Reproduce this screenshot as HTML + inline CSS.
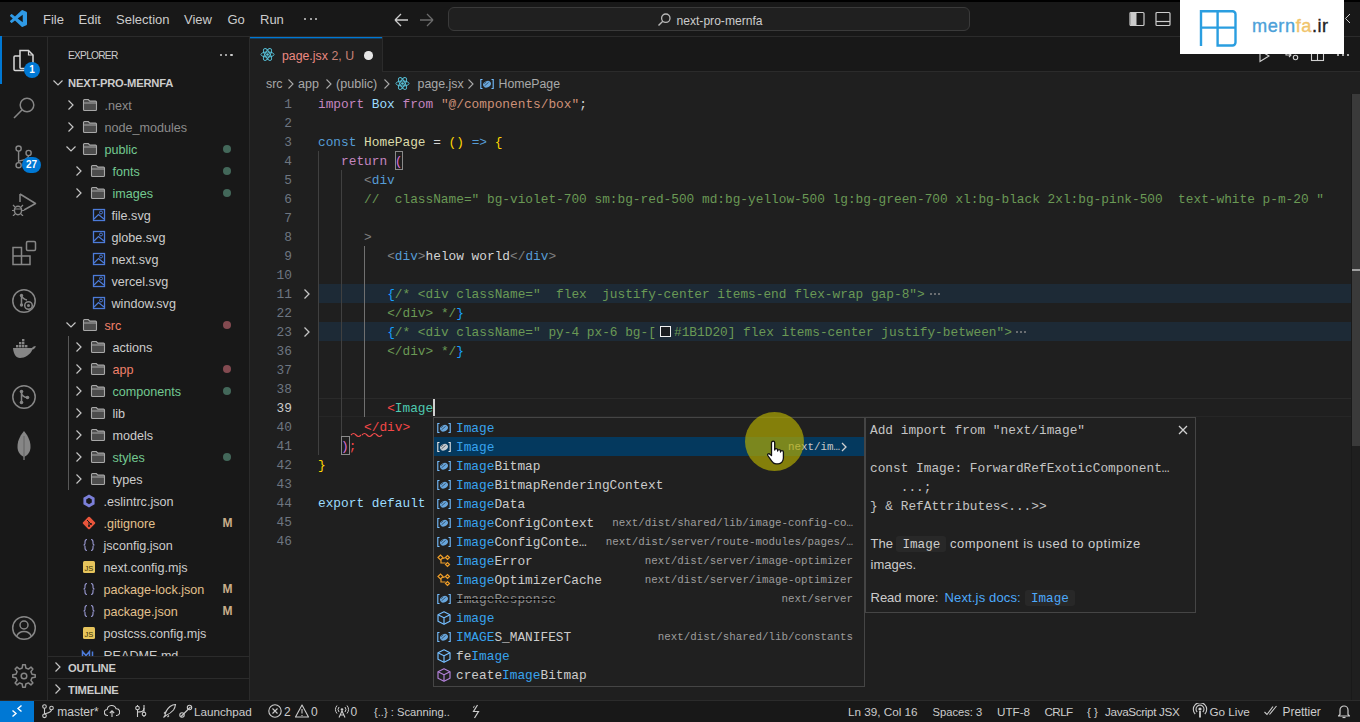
<!DOCTYPE html><html><head><meta charset="utf-8"><style>
*{margin:0;padding:0;box-sizing:border-box}
html,body{width:1360px;height:722px;overflow:hidden;background:#1f1f1f}
body>div,body>svg{position:absolute}
.s{font-family:"Liberation Sans",sans-serif;white-space:pre}
.m{font-family:"Liberation Mono",monospace;white-space:pre}
</style></head><body><div style="left:0px;top:0px;width:1360px;height:2px;background:#000;"></div>
<div style="left:0px;top:2px;width:1360px;height:34px;background:#181818;"></div>
<div style="left:0px;top:36px;width:1360px;height:1px;background:#2b2b2b;"></div>
<div style="left:0px;top:37px;width:47px;height:663px;background:#181818;"></div>
<div style="left:47px;top:37px;width:1px;height:663px;background:#2b2b2b;"></div>
<div style="left:48px;top:37px;width:201px;height:663px;background:#181818;"></div>
<div style="left:249px;top:37px;width:1px;height:663px;background:#2b2b2b;"></div>
<div style="left:250px;top:37px;width:1110px;height:35px;background:#181818;"></div>
<div style="left:250px;top:71px;width:1110px;height:1px;background:#2b2b2b;"></div>
<div style="left:250px;top:37px;width:133px;height:35px;background:#1f1f1f;"></div>
<div style="left:250px;top:37px;width:133px;height:1px;background:#0078d4;"></div>
<div style="left:250px;top:38px;width:133px;height:1px;background:rgba(0,120,212,0.35);"></div>
<div style="left:382px;top:37px;width:1px;height:35px;background:#2b2b2b;"></div>
<div style="left:250px;top:72px;width:1110px;height:628px;background:#1f1f1f;"></div>
<div style="left:0px;top:700px;width:1360px;height:22px;background:#181818;"></div>
<div style="left:0px;top:700px;width:1360px;height:1px;background:#2b2b2b;"></div>
<div style="left:0px;top:701px;width:34px;height:21px;background:#0078d4;"></div>
<svg style="left:9.5px;top:10px" width="17" height="17" viewBox="0 0 100 100"><path fill="#2f9ae6" d="M96.46 10.8 75.86.87a6.23 6.23 0 0 0-7.1 1.2L29.35 38.04 12.17 25a4.16 4.16 0 0 0-5.32.24L1.34 30.25a4.16 4.16 0 0 0 0 6.16L16.26 50 1.34 63.59a4.16 4.16 0 0 0 0 6.16l5.51 5.01a4.16 4.16 0 0 0 5.32.24l17.18-13.04 39.41 35.96a6.23 6.23 0 0 0 7.1 1.2l20.6-9.92A6.24 6.24 0 0 0 100 83.6V16.4a6.24 6.24 0 0 0-3.54-5.6zM75.02 72.7 45.11 50l29.91-22.7z"/></svg>
<div class="s" style="left:43px;top:10px;height:20px;line-height:20px;color:#cccccc;font-size:13px;">File</div>
<div class="s" style="left:78.5px;top:10px;height:20px;line-height:20px;color:#cccccc;font-size:13px;">Edit</div>
<div class="s" style="left:116px;top:10px;height:20px;line-height:20px;color:#cccccc;font-size:13px;">Selection</div>
<div class="s" style="left:184px;top:10px;height:20px;line-height:20px;color:#cccccc;font-size:13px;">View</div>
<div class="s" style="left:227.5px;top:10px;height:20px;line-height:20px;color:#cccccc;font-size:13px;">Go</div>
<div class="s" style="left:260px;top:10px;height:20px;line-height:20px;color:#cccccc;font-size:13px;">Run</div>
<div style="left:304.0px;top:18px;width:2.2px;height:2.2px;background:#cccccc;border-radius:50%"></div>
<div style="left:309.5px;top:18px;width:2.2px;height:2.2px;background:#cccccc;border-radius:50%"></div>
<div style="left:315.0px;top:18px;width:2.2px;height:2.2px;background:#cccccc;border-radius:50%"></div>
<svg style="left:391.5px;top:12px" width="44" height="16" viewBox="0 0 44 16"><path d="M3 8h13M3 8l6-6M3 8l6 6" stroke="#cccccc" stroke-width="1.3" fill="none"/><path d="M28 8h13M41 8l-6-6M41 8l-6 6" stroke="#6b6b6b" stroke-width="1.3" fill="none"/></svg>
<div style="left:448px;top:7px;width:522px;height:24px;background:#202020;border:1px solid #3a3a3a;border-radius:6px"></div>
<svg style="left:656px;top:12px" width="16" height="16" viewBox="0 0 16 16"><circle cx="9.8" cy="6.2" r="4.2" stroke="#b8b8b8" stroke-width="1.3" fill="none"/><path d="M6.8 9.2 2.5 13.5" stroke="#b8b8b8" stroke-width="1.4"/></svg>
<div class="s" style="left:676.5px;top:10.5px;height:20px;line-height:20px;color:#cccccc;font-size:12.1px;">next-pro-mernfa</div>
<svg style="left:1128px;top:11px" width="44" height="16" viewBox="0 0 44 16"><rect x="2" y="1.5" width="14" height="13" rx="1" stroke="#cccccc" stroke-width="1.2" fill="none"/><rect x="2.5" y="2" width="6" height="12" fill="#cccccc"/><rect x="28" y="1.5" width="14" height="13" rx="1" stroke="#cccccc" stroke-width="1.2" fill="none"/><path d="M28 10.5h14" stroke="#cccccc" stroke-width="1.2"/></svg>
<svg style="left:1343px;top:12px" width="20" height="20" viewBox="0 0 20 20"><path d="M7 2 2.5 6.5 7 11" stroke="#cccccc" stroke-width="1" fill="none"/></svg>
<svg style="left:1255px;top:44.5px" width="100" height="20" viewBox="0 0 100 20"><path d="M5 5.5v11l9-5.5z" stroke="#d0d0d0" stroke-width="1.1" fill="none"/><path d="M31 4v6h5M34 8l2 2-2 2" stroke="#d0d0d0" stroke-width="1.1" fill="none"/><circle cx="40.5" cy="12.5" r="2.2" stroke="#d0d0d0" stroke-width="1.1" fill="none"/><rect x="56.5" y="4.5" width="12" height="11" stroke="#d0d0d0" stroke-width="1.1" fill="none"/><path d="M62.5 4.5v11" stroke="#d0d0d0" stroke-width="1.1"/><circle cx="83" cy="10" r="1.1" fill="#d0d0d0"/><circle cx="88" cy="10" r="1.1" fill="#d0d0d0"/><circle cx="93" cy="10" r="1.1" fill="#d0d0d0"/></svg>
<div style="left:0px;top:36px;width:2px;height:48px;background:#0078d4;"></div>
<svg style="left:12px;top:45.5px" width="24" height="26" viewBox="0 0 24 26"><path d="M8 4.5h8.5l4.5 4.5v12.5c0 .6-.4 1-1 1H9c-.6 0-1-.4-1-1z" stroke="#d7d7d7" stroke-width="1.5" fill="none"/><path d="M16.5 4.5V9H21" stroke="#d7d7d7" stroke-width="1.2" fill="none"/><path d="M8 10H3c-.6 0-1 .4-1 1v12.5c0 .6.4 1 1 1h9c.6 0 1-.4 1-1V22" stroke="#d7d7d7" stroke-width="1.5" fill="none"/></svg>
<div style="left:24px;top:61.5px;width:16px;height:16px;background:#0078d4;border-radius:50%"></div>
<div class="s" style="left:24px;top:61.5px;height:16px;line-height:16px;color:#ffffff;font-size:10px;width:16px;text-align:center;font-weight:bold">1</div>
<svg style="left:11px;top:93px" width="26" height="28" viewBox="0 0 26 28"><circle cx="16" cy="12" r="6.8" stroke="#868686" stroke-width="1.5" fill="none"/><path d="M11.2 16.8 3 25" stroke="#868686" stroke-width="1.6"/></svg>
<svg style="left:11px;top:140px" width="26" height="30" viewBox="0 0 26 30"><circle cx="7.6" cy="8.6" r="2.6" stroke="#868686" stroke-width="1.4" fill="none"/><circle cx="17.6" cy="13" r="2.6" stroke="#868686" stroke-width="1.4" fill="none"/><circle cx="7.6" cy="25.2" r="2.6" stroke="#868686" stroke-width="1.4" fill="none"/><path d="M7.6 11.2v11.4M17.6 15.6c0 3-3 4.5-10 5.5" stroke="#868686" stroke-width="1.4" fill="none"/></svg>
<div style="left:22px;top:157px;width:19px;height:16px;background:#0078d4;border-radius:8px"></div>
<div class="s" style="left:22px;top:157px;height:16px;line-height:16px;color:#ffffff;font-size:10px;width:19px;text-align:center;font-weight:bold">27</div>
<svg style="left:10px;top:190px" width="28" height="26" viewBox="0 0 28 26"><path d="M10 4v8M10 4l15.5 9.5L14 20" stroke="#868686" stroke-width="1.5" fill="none" stroke-linejoin="round"/><ellipse cx="8" cy="20.5" rx="3.6" ry="4.2" stroke="#868686" stroke-width="1.5" fill="none"/><path d="M4.4 20.5H2M11.6 20.5H14M5 17l-2-2M11 17l2-2M5 24l-2 2M11 24l2 2M4.5 19h7" stroke="#868686" stroke-width="1.2"/></svg>
<svg style="left:10px;top:238px" width="28" height="28" viewBox="0 0 28 28"><path d="M3 9.5h8.5v8.5H3zM3 18h8.5v8.5H3zM11.5 18H20v8.5h-8.5z" stroke="#868686" stroke-width="1.5" fill="none"/><rect x="16.5" y="3.5" width="9" height="9" rx="1.2" stroke="#868686" stroke-width="1.5" fill="none"/></svg>
<svg style="left:11px;top:288px" width="26" height="26" viewBox="0 0 26 26"><circle cx="13" cy="13" r="11.2" stroke="#868686" stroke-width="1.5" fill="none"/><circle cx="10.5" cy="7.5" r="1.7" fill="#868686"/><circle cx="10.5" cy="17" r="1.7" fill="#868686"/><path d="M10.5 7.5v9.5M10.5 7.5c1 3 3 4 5.5 4.5" stroke="#868686" stroke-width="1.5" fill="none"/><circle cx="17.5" cy="17.5" r="3.8" fill="#181818" stroke="#868686" stroke-width="1.5"/><circle cx="17.5" cy="17.5" r="1.5" fill="#868686"/></svg>
<svg style="left:11px;top:336px" width="26" height="24" viewBox="0 0 26 24"><path d="M2 12h19c1-1.5 2.5-2 4-1.5-1 1.5-2 3-3.5 3C19 19 14 22 9 22 5 22 2.5 18 2 12z" fill="#868686"/><rect x="5" y="9" width="2.4" height="2.4" fill="#868686"/><rect x="8" y="9" width="2.4" height="2.4" fill="#868686"/><rect x="11" y="9" width="2.4" height="2.4" fill="#868686"/><rect x="14" y="9" width="2.4" height="2.4" fill="#868686"/><rect x="8" y="6" width="2.4" height="2.4" fill="#868686"/><rect x="11" y="6" width="2.4" height="2.4" fill="#868686"/><rect x="11" y="3" width="2.4" height="2.4" fill="#868686"/></svg>
<svg style="left:11px;top:384px" width="26" height="26" viewBox="0 0 26 26"><circle cx="13" cy="13" r="11.2" stroke="#868686" stroke-width="1.5" fill="none"/><circle cx="10.5" cy="7.5" r="1.8" fill="#868686"/><circle cx="10.5" cy="18.5" r="1.8" fill="#868686"/><circle cx="16.5" cy="13.5" r="1.8" fill="#868686"/><path d="M10.5 7.5v11M10.5 8.5c0 3 3 5 6 5" stroke="#868686" stroke-width="1.5" fill="none"/></svg>
<svg style="left:14px;top:430px" width="20" height="32" viewBox="0 0 20 32"><path d="M10 1C5 7 3.5 12 3.5 17c0 5 3 8.5 6.5 10 3.5-1.5 6.5-5 6.5-10 0-5-1.5-10-6.5-16z" fill="#868686"/><path d="M10 20v10" stroke="#868686" stroke-width="1.2"/><path d="M10 6v21" stroke="#5a5a5a" stroke-width="0.8"/></svg>
<svg style="left:11px;top:615px" width="26" height="26" viewBox="0 0 26 26"><circle cx="13" cy="13" r="11.3" stroke="#868686" stroke-width="1.5" fill="none"/><circle cx="13" cy="10" r="4" stroke="#868686" stroke-width="1.5" fill="none"/><path d="M5.5 21.5c1.5-3.5 4-5 7.5-5s6 1.5 7.5 5" stroke="#868686" stroke-width="1.5" fill="none"/></svg>
<svg style="left:11px;top:663px" width="26" height="26" viewBox="0 0 26 26"><polygon points="21.00,11.21 24.22,11.65 24.22,14.35 21.00,14.79 19.92,17.39 21.89,19.98 19.98,21.89 17.39,19.92 14.79,21.00 14.35,24.22 11.65,24.22 11.21,21.00 8.61,19.92 6.02,21.89 4.11,19.98 6.08,17.39 5.00,14.79 1.78,14.35 1.78,11.65 5.00,11.21 6.08,8.61 4.11,6.02 6.02,4.11 8.61,6.08 11.21,5.00 11.65,1.78 14.35,1.78 14.79,5.00 17.39,6.08 19.98,4.11 21.89,6.02 19.92,8.61" stroke="#868686" stroke-width="1.5" fill="none" stroke-linejoin="round"/><circle cx="13" cy="13" r="2.8" stroke="#868686" stroke-width="1.5" fill="none"/></svg>
<div class="s" style="left:68px;top:47px;height:18px;line-height:18px;color:#cccccc;font-size:10.2px;letter-spacing:-0.75px">EXPLORER</div>
<div style="left:220.0px;top:54px;width:2.2px;height:2.2px;background:#cccccc;border-radius:50%"></div>
<div style="left:225.2px;top:54px;width:2.2px;height:2.2px;background:#cccccc;border-radius:50%"></div>
<div style="left:230.4px;top:54px;width:2.2px;height:2.2px;background:#cccccc;border-radius:50%"></div>
<svg style="left:50px;top:75px" width="16" height="16" viewBox="0 0 16 16"><path d="M3.5 5.5 8 10l4.5-4.5" stroke="#c5c5c5" stroke-width="1.2" fill="none"/></svg>
<div class="s" style="left:68px;top:74px;height:18px;line-height:18px;color:#cccccc;font-size:11.2px;font-weight:bold;letter-spacing:-0.2px">NEXT-PRO-MERNFA</div>
<div style="left:67.5px;top:336px;width:1px;height:154px;background:#585858;"></div>
<svg style="left:63px;top:97px" width="16" height="16" viewBox="0 0 16 16"><path d="M5.5 3.5 10 8l-4.5 4.5" stroke="#c5c5c5" stroke-width="1.2" fill="none"/></svg>
<svg style="left:82px;top:97px" width="16" height="16" viewBox="0 0 16 16"><path d="M1.5 3.5c0-.6.4-1 1-1h3.8l1.6 1.6h5.6c.6 0 1 .4 1 1v7.4c0 .6-.4 1-1 1H2.5c-.6 0-1-.4-1-1z" fill="#4d4d4d" stroke="#a8a8a8" stroke-width="1.1"/><path d="M1.5 6h13" stroke="#a8a8a8" stroke-width="1"/></svg>
<div class="s" style="left:104.5px;top:96.5px;height:18px;line-height:18px;color:#8c8c8c;font-size:12.6px;">.next</div>
<svg style="left:63px;top:119px" width="16" height="16" viewBox="0 0 16 16"><path d="M5.5 3.5 10 8l-4.5 4.5" stroke="#c5c5c5" stroke-width="1.2" fill="none"/></svg>
<svg style="left:82px;top:119px" width="16" height="16" viewBox="0 0 16 16"><path d="M1.5 3.5c0-.6.4-1 1-1h3.8l1.6 1.6h5.6c.6 0 1 .4 1 1v7.4c0 .6-.4 1-1 1H2.5c-.6 0-1-.4-1-1z" fill="#4d4d4d" stroke="#a8a8a8" stroke-width="1.1"/><path d="M1.5 6h13" stroke="#a8a8a8" stroke-width="1"/></svg>
<div class="s" style="left:104.5px;top:118.5px;height:18px;line-height:18px;color:#8c8c8c;font-size:12.6px;">node_modules</div>
<svg style="left:63px;top:141px" width="16" height="16" viewBox="0 0 16 16"><path d="M3.5 5.5 8 10l4.5-4.5" stroke="#c5c5c5" stroke-width="1.2" fill="none"/></svg>
<svg style="left:82px;top:141px" width="16" height="16" viewBox="0 0 16 16"><path d="M1.5 3.5c0-.6.4-1 1-1h3.8l1.6 1.6h5.6c.6 0 1 .4 1 1v7.4c0 .6-.4 1-1 1H2.5c-.6 0-1-.4-1-1z" fill="#4d4d4d" stroke="#a8a8a8" stroke-width="1.1"/><path d="M1.5 6h13" stroke="#a8a8a8" stroke-width="1"/></svg>
<div class="s" style="left:104.5px;top:140.5px;height:18px;line-height:18px;color:#73c991;font-size:12.6px;">public</div>
<div style="left:223px;top:145px;width:8px;height:8px;background:#43685a;border-radius:50%"></div>
<svg style="left:71px;top:163px" width="16" height="16" viewBox="0 0 16 16"><path d="M5.5 3.5 10 8l-4.5 4.5" stroke="#c5c5c5" stroke-width="1.2" fill="none"/></svg>
<svg style="left:90px;top:163px" width="16" height="16" viewBox="0 0 16 16"><path d="M1.5 3.5c0-.6.4-1 1-1h3.8l1.6 1.6h5.6c.6 0 1 .4 1 1v7.4c0 .6-.4 1-1 1H2.5c-.6 0-1-.4-1-1z" fill="#4d4d4d" stroke="#a8a8a8" stroke-width="1.1"/><path d="M1.5 6h13" stroke="#a8a8a8" stroke-width="1"/></svg>
<div class="s" style="left:112.5px;top:162.5px;height:18px;line-height:18px;color:#73c991;font-size:12.6px;">fonts</div>
<div style="left:223px;top:167px;width:8px;height:8px;background:#43685a;border-radius:50%"></div>
<svg style="left:71px;top:185px" width="16" height="16" viewBox="0 0 16 16"><path d="M5.5 3.5 10 8l-4.5 4.5" stroke="#c5c5c5" stroke-width="1.2" fill="none"/></svg>
<svg style="left:90px;top:185px" width="16" height="16" viewBox="0 0 16 16"><path d="M1.5 3.5c0-.6.4-1 1-1h3.8l1.6 1.6h5.6c.6 0 1 .4 1 1v7.4c0 .6-.4 1-1 1H2.5c-.6 0-1-.4-1-1z" fill="#4d4d4d" stroke="#a8a8a8" stroke-width="1.1"/><path d="M1.5 6h13" stroke="#a8a8a8" stroke-width="1"/></svg>
<div class="s" style="left:112.5px;top:184.5px;height:18px;line-height:18px;color:#73c991;font-size:12.6px;">images</div>
<div style="left:223px;top:189px;width:8px;height:8px;background:#43685a;border-radius:50%"></div>
<svg style="left:91px;top:207px" width="16" height="16" viewBox="0 0 16 16"><rect x="2.5" y="2.5" width="11" height="11" stroke="#4c7bd9" stroke-width="1.3" fill="none"/><path d="M3 12l4.5-4.5L13 12" stroke="#4c7bd9" stroke-width="1.2" fill="none"/><circle cx="10" cy="5.5" r="1.5" stroke="#4c7bd9" stroke-width="1" fill="none"/></svg>
<div class="s" style="left:111.5px;top:206.5px;height:18px;line-height:18px;color:#cccccc;font-size:12.6px;">file.svg</div>
<svg style="left:91px;top:229px" width="16" height="16" viewBox="0 0 16 16"><rect x="2.5" y="2.5" width="11" height="11" stroke="#4c7bd9" stroke-width="1.3" fill="none"/><path d="M3 12l4.5-4.5L13 12" stroke="#4c7bd9" stroke-width="1.2" fill="none"/><circle cx="10" cy="5.5" r="1.5" stroke="#4c7bd9" stroke-width="1" fill="none"/></svg>
<div class="s" style="left:111.5px;top:228.5px;height:18px;line-height:18px;color:#cccccc;font-size:12.6px;">globe.svg</div>
<svg style="left:91px;top:251px" width="16" height="16" viewBox="0 0 16 16"><rect x="2.5" y="2.5" width="11" height="11" stroke="#4c7bd9" stroke-width="1.3" fill="none"/><path d="M3 12l4.5-4.5L13 12" stroke="#4c7bd9" stroke-width="1.2" fill="none"/><circle cx="10" cy="5.5" r="1.5" stroke="#4c7bd9" stroke-width="1" fill="none"/></svg>
<div class="s" style="left:111.5px;top:250.5px;height:18px;line-height:18px;color:#cccccc;font-size:12.6px;">next.svg</div>
<svg style="left:91px;top:273px" width="16" height="16" viewBox="0 0 16 16"><rect x="2.5" y="2.5" width="11" height="11" stroke="#4c7bd9" stroke-width="1.3" fill="none"/><path d="M3 12l4.5-4.5L13 12" stroke="#4c7bd9" stroke-width="1.2" fill="none"/><circle cx="10" cy="5.5" r="1.5" stroke="#4c7bd9" stroke-width="1" fill="none"/></svg>
<div class="s" style="left:111.5px;top:272.5px;height:18px;line-height:18px;color:#cccccc;font-size:12.6px;">vercel.svg</div>
<svg style="left:91px;top:295px" width="16" height="16" viewBox="0 0 16 16"><rect x="2.5" y="2.5" width="11" height="11" stroke="#4c7bd9" stroke-width="1.3" fill="none"/><path d="M3 12l4.5-4.5L13 12" stroke="#4c7bd9" stroke-width="1.2" fill="none"/><circle cx="10" cy="5.5" r="1.5" stroke="#4c7bd9" stroke-width="1" fill="none"/></svg>
<div class="s" style="left:111.5px;top:294.5px;height:18px;line-height:18px;color:#cccccc;font-size:12.6px;">window.svg</div>
<svg style="left:63px;top:317px" width="16" height="16" viewBox="0 0 16 16"><path d="M3.5 5.5 8 10l4.5-4.5" stroke="#c5c5c5" stroke-width="1.2" fill="none"/></svg>
<svg style="left:82px;top:317px" width="16" height="16" viewBox="0 0 16 16"><path d="M1.5 3.5c0-.6.4-1 1-1h3.8l1.6 1.6h5.6c.6 0 1 .4 1 1v7.4c0 .6-.4 1-1 1H2.5c-.6 0-1-.4-1-1z" fill="#4d4d4d" stroke="#a8a8a8" stroke-width="1.1"/><path d="M1.5 6h13" stroke="#a8a8a8" stroke-width="1"/></svg>
<div class="s" style="left:104.5px;top:316.5px;height:18px;line-height:18px;color:#f0806a;font-size:12.6px;">src</div>
<div style="left:223px;top:321px;width:8px;height:8px;background:#834a50;border-radius:50%"></div>
<svg style="left:71px;top:339px" width="16" height="16" viewBox="0 0 16 16"><path d="M5.5 3.5 10 8l-4.5 4.5" stroke="#c5c5c5" stroke-width="1.2" fill="none"/></svg>
<svg style="left:90px;top:339px" width="16" height="16" viewBox="0 0 16 16"><path d="M1.5 3.5c0-.6.4-1 1-1h3.8l1.6 1.6h5.6c.6 0 1 .4 1 1v7.4c0 .6-.4 1-1 1H2.5c-.6 0-1-.4-1-1z" fill="#4d4d4d" stroke="#a8a8a8" stroke-width="1.1"/><path d="M1.5 6h13" stroke="#a8a8a8" stroke-width="1"/></svg>
<div class="s" style="left:112.5px;top:338.5px;height:18px;line-height:18px;color:#cccccc;font-size:12.6px;">actions</div>
<svg style="left:71px;top:361px" width="16" height="16" viewBox="0 0 16 16"><path d="M5.5 3.5 10 8l-4.5 4.5" stroke="#c5c5c5" stroke-width="1.2" fill="none"/></svg>
<svg style="left:90px;top:361px" width="16" height="16" viewBox="0 0 16 16"><path d="M1.5 3.5c0-.6.4-1 1-1h3.8l1.6 1.6h5.6c.6 0 1 .4 1 1v7.4c0 .6-.4 1-1 1H2.5c-.6 0-1-.4-1-1z" fill="#4d4d4d" stroke="#a8a8a8" stroke-width="1.1"/><path d="M1.5 6h13" stroke="#a8a8a8" stroke-width="1"/></svg>
<div class="s" style="left:112.5px;top:360.5px;height:18px;line-height:18px;color:#f0806a;font-size:12.6px;">app</div>
<div style="left:223px;top:365px;width:8px;height:8px;background:#834a50;border-radius:50%"></div>
<svg style="left:71px;top:383px" width="16" height="16" viewBox="0 0 16 16"><path d="M5.5 3.5 10 8l-4.5 4.5" stroke="#c5c5c5" stroke-width="1.2" fill="none"/></svg>
<svg style="left:90px;top:383px" width="16" height="16" viewBox="0 0 16 16"><path d="M1.5 3.5c0-.6.4-1 1-1h3.8l1.6 1.6h5.6c.6 0 1 .4 1 1v7.4c0 .6-.4 1-1 1H2.5c-.6 0-1-.4-1-1z" fill="#4d4d4d" stroke="#a8a8a8" stroke-width="1.1"/><path d="M1.5 6h13" stroke="#a8a8a8" stroke-width="1"/></svg>
<div class="s" style="left:112.5px;top:382.5px;height:18px;line-height:18px;color:#73c991;font-size:12.6px;">components</div>
<div style="left:223px;top:387px;width:8px;height:8px;background:#43685a;border-radius:50%"></div>
<svg style="left:71px;top:405px" width="16" height="16" viewBox="0 0 16 16"><path d="M5.5 3.5 10 8l-4.5 4.5" stroke="#c5c5c5" stroke-width="1.2" fill="none"/></svg>
<svg style="left:90px;top:405px" width="16" height="16" viewBox="0 0 16 16"><path d="M1.5 3.5c0-.6.4-1 1-1h3.8l1.6 1.6h5.6c.6 0 1 .4 1 1v7.4c0 .6-.4 1-1 1H2.5c-.6 0-1-.4-1-1z" fill="#4d4d4d" stroke="#a8a8a8" stroke-width="1.1"/><path d="M1.5 6h13" stroke="#a8a8a8" stroke-width="1"/></svg>
<div class="s" style="left:112.5px;top:404.5px;height:18px;line-height:18px;color:#cccccc;font-size:12.6px;">lib</div>
<svg style="left:71px;top:427px" width="16" height="16" viewBox="0 0 16 16"><path d="M5.5 3.5 10 8l-4.5 4.5" stroke="#c5c5c5" stroke-width="1.2" fill="none"/></svg>
<svg style="left:90px;top:427px" width="16" height="16" viewBox="0 0 16 16"><path d="M1.5 3.5c0-.6.4-1 1-1h3.8l1.6 1.6h5.6c.6 0 1 .4 1 1v7.4c0 .6-.4 1-1 1H2.5c-.6 0-1-.4-1-1z" fill="#4d4d4d" stroke="#a8a8a8" stroke-width="1.1"/><path d="M1.5 6h13" stroke="#a8a8a8" stroke-width="1"/></svg>
<div class="s" style="left:112.5px;top:426.5px;height:18px;line-height:18px;color:#cccccc;font-size:12.6px;">models</div>
<svg style="left:71px;top:449px" width="16" height="16" viewBox="0 0 16 16"><path d="M5.5 3.5 10 8l-4.5 4.5" stroke="#c5c5c5" stroke-width="1.2" fill="none"/></svg>
<svg style="left:90px;top:449px" width="16" height="16" viewBox="0 0 16 16"><path d="M1.5 3.5c0-.6.4-1 1-1h3.8l1.6 1.6h5.6c.6 0 1 .4 1 1v7.4c0 .6-.4 1-1 1H2.5c-.6 0-1-.4-1-1z" fill="#4d4d4d" stroke="#a8a8a8" stroke-width="1.1"/><path d="M1.5 6h13" stroke="#a8a8a8" stroke-width="1"/></svg>
<div class="s" style="left:112.5px;top:448.5px;height:18px;line-height:18px;color:#73c991;font-size:12.6px;">styles</div>
<div style="left:223px;top:453px;width:8px;height:8px;background:#43685a;border-radius:50%"></div>
<svg style="left:71px;top:471px" width="16" height="16" viewBox="0 0 16 16"><path d="M5.5 3.5 10 8l-4.5 4.5" stroke="#c5c5c5" stroke-width="1.2" fill="none"/></svg>
<svg style="left:90px;top:471px" width="16" height="16" viewBox="0 0 16 16"><path d="M1.5 3.5c0-.6.4-1 1-1h3.8l1.6 1.6h5.6c.6 0 1 .4 1 1v7.4c0 .6-.4 1-1 1H2.5c-.6 0-1-.4-1-1z" fill="#4d4d4d" stroke="#a8a8a8" stroke-width="1.1"/><path d="M1.5 6h13" stroke="#a8a8a8" stroke-width="1"/></svg>
<div class="s" style="left:112.5px;top:470.5px;height:18px;line-height:18px;color:#cccccc;font-size:12.6px;">types</div>
<svg style="left:81px;top:493px" width="16" height="16" viewBox="0 0 16 16"><polygon points="8,1.5 13.6,4.75 13.6,11.25 8,14.5 2.4,11.25 2.4,4.75" fill="#7b7fd8"/><polygon points="8,4.8 10.8,6.4 10.8,9.6 8,11.2 5.2,9.6 5.2,6.4" fill="#181818"/></svg>
<div class="s" style="left:103.5px;top:492.5px;height:18px;line-height:18px;color:#cccccc;font-size:12.6px;">.eslintrc.json</div>
<svg style="left:81px;top:515px" width="16" height="16" viewBox="0 0 16 16"><rect x="3.2" y="3.2" width="9.6" height="9.6" rx="1.2" transform="rotate(45 8 8)" fill="#e8553b"/><path d="M6 5l4 4M8 7v4" stroke="#181818" stroke-width="1"/><circle cx="8" cy="11" r="1" fill="#181818"/><circle cx="10" cy="9" r="1" fill="#181818"/></svg>
<div class="s" style="left:103.5px;top:514.5px;height:18px;line-height:18px;color:#e2c08d;font-size:12.6px;">.gitignore</div>
<div class="s" style="left:222.5px;top:514px;height:18px;line-height:18px;color:#c8ae8a;font-size:12px;font-weight:bold">M</div>
<svg style="left:81px;top:537px" width="16" height="16" viewBox="0 0 16 16"><path d="M6 2.5c-2 0-2 1-2 2.5v1.5c0 1-.8 1.5-1.5 1.5.7 0 1.5.5 1.5 1.5V11c0 1.5 0 2.5 2 2.5M10 2.5c2 0 2 1 2 2.5v1.5c0 1 .8 1.5 1.5 1.5-.7 0-1.5.5-1.5 1.5V11c0 1.5 0 2.5-2 2.5" stroke="#9b9bd4" stroke-width="1.1" fill="none"/></svg>
<div class="s" style="left:103.5px;top:536.5px;height:18px;line-height:18px;color:#cccccc;font-size:12.6px;">jsconfig.json</div>
<svg style="left:81px;top:559px" width="16" height="16" viewBox="0 0 16 16"><rect x="2" y="2" width="12" height="12" rx="1.5" fill="#e6c45c"/><text x="8" y="11.6" font-family="Liberation Sans" font-size="7.5" text-anchor="middle" fill="#3a3000">JS</text></svg>
<div class="s" style="left:103.5px;top:558.5px;height:18px;line-height:18px;color:#cccccc;font-size:12.6px;">next.config.mjs</div>
<svg style="left:81px;top:581px" width="16" height="16" viewBox="0 0 16 16"><path d="M6 2.5c-2 0-2 1-2 2.5v1.5c0 1-.8 1.5-1.5 1.5.7 0 1.5.5 1.5 1.5V11c0 1.5 0 2.5 2 2.5M10 2.5c2 0 2 1 2 2.5v1.5c0 1 .8 1.5 1.5 1.5-.7 0-1.5.5-1.5 1.5V11c0 1.5 0 2.5-2 2.5" stroke="#9b9bd4" stroke-width="1.1" fill="none"/></svg>
<div class="s" style="left:103.5px;top:580.5px;height:18px;line-height:18px;color:#e2c08d;font-size:12.6px;">package-lock.json</div>
<div class="s" style="left:222.5px;top:580px;height:18px;line-height:18px;color:#c8ae8a;font-size:12px;font-weight:bold">M</div>
<svg style="left:81px;top:603px" width="16" height="16" viewBox="0 0 16 16"><path d="M6 2.5c-2 0-2 1-2 2.5v1.5c0 1-.8 1.5-1.5 1.5.7 0 1.5.5 1.5 1.5V11c0 1.5 0 2.5 2 2.5M10 2.5c2 0 2 1 2 2.5v1.5c0 1 .8 1.5 1.5 1.5-.7 0-1.5.5-1.5 1.5V11c0 1.5 0 2.5-2 2.5" stroke="#9b9bd4" stroke-width="1.1" fill="none"/></svg>
<div class="s" style="left:103.5px;top:602.5px;height:18px;line-height:18px;color:#e2c08d;font-size:12.6px;">package.json</div>
<div class="s" style="left:222.5px;top:602px;height:18px;line-height:18px;color:#c8ae8a;font-size:12px;font-weight:bold">M</div>
<svg style="left:81px;top:625px" width="16" height="16" viewBox="0 0 16 16"><rect x="2" y="2" width="12" height="12" rx="1.5" fill="#e6c45c"/><text x="8" y="11.6" font-family="Liberation Sans" font-size="7.5" text-anchor="middle" fill="#3a3000">JS</text></svg>
<div class="s" style="left:103.5px;top:624.5px;height:18px;line-height:18px;color:#cccccc;font-size:12.6px;">postcss.config.mjs</div>
<svg style="left:81px;top:647px" width="16" height="16" viewBox="0 0 16 16"><path d="M1.5 12V4.5l3.5 4 3.5-4V12M11.5 4.5V12M9.5 10l2 2 2-2" stroke="#4c7bd9" stroke-width="1.5" fill="none"/></svg>
<div class="s" style="left:103.5px;top:646.5px;height:18px;line-height:18px;color:#cccccc;font-size:12.6px;">README.md</div>
<div style="left:48px;top:656px;width:201px;height:44px;background:#181818;"></div>
<div style="left:48px;top:656px;width:201px;height:1px;background:#2b2b2b;"></div>
<div style="left:48px;top:678px;width:201px;height:1px;background:#2b2b2b;"></div>
<svg style="left:50px;top:659px" width="16" height="16" viewBox="0 0 16 16"><path d="M5.5 3.5 10 8l-4.5 4.5" stroke="#c5c5c5" stroke-width="1.2" fill="none"/></svg>
<div class="s" style="left:68px;top:659px;height:18px;line-height:18px;color:#cccccc;font-size:11.2px;font-weight:bold;letter-spacing:-0.2px">OUTLINE</div>
<svg style="left:50px;top:681px" width="16" height="16" viewBox="0 0 16 16"><path d="M5.5 3.5 10 8l-4.5 4.5" stroke="#c5c5c5" stroke-width="1.2" fill="none"/></svg>
<div class="s" style="left:68px;top:681px;height:18px;line-height:18px;color:#cccccc;font-size:11.2px;font-weight:bold;letter-spacing:-0.2px">TIMELINE</div>
<svg style="left:260px;top:47px" width="15" height="15" viewBox="0 0 16 16"><g stroke="#58c4dc" stroke-width="1" fill="none"><ellipse cx="8" cy="8" rx="7" ry="2.7"/><ellipse cx="8" cy="8" rx="7" ry="2.7" transform="rotate(60 8 8)"/><ellipse cx="8" cy="8" rx="7" ry="2.7" transform="rotate(-60 8 8)"/></g><circle cx="8" cy="8" r="1.4" fill="#58c4dc"/></svg>
<div class="s" style="left:282px;top:47px;height:18px;line-height:18px;color:#ec8a82;font-size:12.3px;">page.jsx</div>
<div class="s" style="left:331.5px;top:47px;height:18px;line-height:18px;color:#c98276;font-size:12.3px;">2, U</div>
<div style="left:364px;top:51px;width:8.5px;height:8.5px;background:#e6e6e6;border-radius:50%"></div>
<div class="s" style="left:266px;top:75px;height:18px;line-height:18px;color:#a9a9a9;font-size:12.4px;">src</div>
<svg style="left:283px;top:76px" width="16" height="16" viewBox="0 0 16 16"><path d="M5.5 3.5 10 8l-4.5 4.5" stroke="#a9a9a9" stroke-width="1.1" fill="none"/></svg>
<div class="s" style="left:298px;top:75px;height:18px;line-height:18px;color:#a9a9a9;font-size:12.5px;">app</div>
<svg style="left:320.5px;top:76px" width="16" height="16" viewBox="0 0 16 16"><path d="M5.5 3.5 10 8l-4.5 4.5" stroke="#a9a9a9" stroke-width="1.1" fill="none"/></svg>
<div class="s" style="left:336px;top:75px;height:18px;line-height:18px;color:#a9a9a9;font-size:12.6px;">(public)</div>
<svg style="left:379px;top:76px" width="16" height="16" viewBox="0 0 16 16"><path d="M5.5 3.5 10 8l-4.5 4.5" stroke="#a9a9a9" stroke-width="1.1" fill="none"/></svg>
<svg style="left:395px;top:76px" width="15" height="15" viewBox="0 0 16 16"><g stroke="#58c4dc" stroke-width="1" fill="none"><ellipse cx="8" cy="8" rx="7" ry="2.7"/><ellipse cx="8" cy="8" rx="7" ry="2.7" transform="rotate(60 8 8)"/><ellipse cx="8" cy="8" rx="7" ry="2.7" transform="rotate(-60 8 8)"/></g><circle cx="8" cy="8" r="1.4" fill="#58c4dc"/></svg>
<div class="s" style="left:417.5px;top:75px;height:18px;line-height:18px;color:#a9a9a9;font-size:12.4px;">page.jsx</div>
<svg style="left:462.5px;top:76px" width="16" height="16" viewBox="0 0 16 16"><path d="M5.5 3.5 10 8l-4.5 4.5" stroke="#a9a9a9" stroke-width="1.1" fill="none"/></svg>
<svg style="left:479px;top:76px" width="16" height="16" viewBox="0 0 16 16"><path d="M3.5 3.5H1.8v9h1.7M12.5 3.5h1.7v9h-1.7" stroke="#75beff" stroke-width="1.1" fill="none"/><ellipse cx="8" cy="8.2" rx="4.1" ry="3.1" transform="rotate(-28 8 8.2)" fill="#75beff" fill-opacity="0.85"/><path d="M5.6 9.8 9.6 6.4M5 7.6l2.2-1.8" stroke="#1f1f1f" stroke-width="0.8" opacity="0.75"/></svg>
<div class="s" style="left:498.5px;top:75px;height:18px;line-height:18px;color:#a9a9a9;font-size:12.3px;">HomePage</div>
<div style="left:319px;top:284px;width:1033px;height:19px;background:#1d2a36;"></div>
<div style="left:319px;top:322px;width:1033px;height:19px;background:#1d2a36;"></div>
<div style="left:319px;top:398px;width:1033px;height:1px;background:#2a2a2a;"></div>
<div style="left:319px;top:416px;width:1033px;height:1px;background:#262626;"></div>
<div style="left:318px;top:151px;width:1px;height:304px;background:#404040;"></div>
<div style="left:341px;top:170px;width:1px;height:266px;background:#404040;"></div>
<div style="left:364px;top:246px;width:1px;height:171px;background:#707070;"></div>
<div class="m" style="left:284.3px;top:95px;height:19px;line-height:19px;font-size:12.8px;color:#6e7681">1</div>
<div class="m" style="left:284.3px;top:114px;height:19px;line-height:19px;font-size:12.8px;color:#6e7681">2</div>
<div class="m" style="left:284.3px;top:133px;height:19px;line-height:19px;font-size:12.8px;color:#6e7681">3</div>
<div class="m" style="left:284.3px;top:152px;height:19px;line-height:19px;font-size:12.8px;color:#6e7681">4</div>
<div class="m" style="left:284.3px;top:171px;height:19px;line-height:19px;font-size:12.8px;color:#6e7681">5</div>
<div class="m" style="left:284.3px;top:190px;height:19px;line-height:19px;font-size:12.8px;color:#6e7681">6</div>
<div class="m" style="left:284.3px;top:209px;height:19px;line-height:19px;font-size:12.8px;color:#6e7681">7</div>
<div class="m" style="left:284.3px;top:228px;height:19px;line-height:19px;font-size:12.8px;color:#6e7681">8</div>
<div class="m" style="left:284.3px;top:247px;height:19px;line-height:19px;font-size:12.8px;color:#6e7681">9</div>
<div class="m" style="left:276.6px;top:266px;height:19px;line-height:19px;font-size:12.8px;color:#6e7681">10</div>
<div class="m" style="left:276.6px;top:285px;height:19px;line-height:19px;font-size:12.8px;color:#6e7681">11</div>
<div class="m" style="left:276.6px;top:304px;height:19px;line-height:19px;font-size:12.8px;color:#6e7681">22</div>
<div class="m" style="left:276.6px;top:323px;height:19px;line-height:19px;font-size:12.8px;color:#6e7681">23</div>
<div class="m" style="left:276.6px;top:342px;height:19px;line-height:19px;font-size:12.8px;color:#6e7681">36</div>
<div class="m" style="left:276.6px;top:361px;height:19px;line-height:19px;font-size:12.8px;color:#6e7681">37</div>
<div class="m" style="left:276.6px;top:380px;height:19px;line-height:19px;font-size:12.8px;color:#6e7681">38</div>
<div class="m" style="left:276.6px;top:399px;height:19px;line-height:19px;font-size:12.8px;color:#cccccc">39</div>
<div class="m" style="left:276.6px;top:418px;height:19px;line-height:19px;font-size:12.8px;color:#6e7681">40</div>
<div class="m" style="left:276.6px;top:437px;height:19px;line-height:19px;font-size:12.8px;color:#6e7681">41</div>
<div class="m" style="left:276.6px;top:456px;height:19px;line-height:19px;font-size:12.8px;color:#6e7681">42</div>
<div class="m" style="left:276.6px;top:475px;height:19px;line-height:19px;font-size:12.8px;color:#6e7681">43</div>
<div class="m" style="left:276.6px;top:494px;height:19px;line-height:19px;font-size:12.8px;color:#6e7681">44</div>
<div class="m" style="left:276.6px;top:513px;height:19px;line-height:19px;font-size:12.8px;color:#6e7681">45</div>
<div class="m" style="left:276.6px;top:532px;height:19px;line-height:19px;font-size:12.8px;color:#6e7681">46</div>
<svg style="left:299px;top:285.5px" width="16" height="16" viewBox="0 0 16 16"><path d="M5.5 3.5 10 8l-4.5 4.5" stroke="#c5c5c5" stroke-width="1.3" fill="none"/></svg>
<svg style="left:299px;top:323.5px" width="16" height="16" viewBox="0 0 16 16"><path d="M5.5 3.5 10 8l-4.5 4.5" stroke="#c5c5c5" stroke-width="1.3" fill="none"/></svg>
<div class="m" style="left:318.0px;top:95px;height:19px;line-height:19px;font-size:12.8px"><span style="color:#c586c0">import</span><span style="color:#d4d4d4"> </span><span style="color:#9cdcfe">Box</span><span style="color:#d4d4d4"> </span><span style="color:#c586c0">from</span><span style="color:#d4d4d4"> </span><span style="color:#ce9178">"@/components/box"</span><span style="color:#d4d4d4">;</span></div>
<div class="m" style="left:318.0px;top:133px;height:19px;line-height:19px;font-size:12.8px"><span style="color:#569cd6">const</span><span style="color:#d4d4d4"> </span><span style="color:#dcdcaa">HomePage</span><span style="color:#d4d4d4"> = </span><span style="color:#ffd700">()</span><span style="color:#d4d4d4"> </span><span style="color:#569cd6">=&gt;</span><span style="color:#d4d4d4"> </span><span style="color:#ffd700">{</span></div>
<div class="m" style="left:318.0px;top:152px;height:19px;line-height:19px;font-size:12.8px"><span style="color:#d4d4d4">   </span><span style="color:#c586c0">return</span><span style="color:#d4d4d4"> </span><span style="color:#da70d6">(</span></div>
<div style="left:395px;top:151px;width:8px;height:19px;background:transparent;border:1px solid #8a8a8a"></div>
<div class="m" style="left:318.0px;top:171px;height:19px;line-height:19px;font-size:12.8px"><span style="color:#d4d4d4">      </span><span style="color:#808080">&lt;</span><span style="color:#569cd6">div</span></div>
<div class="m" style="left:318.0px;top:190px;height:19px;line-height:19px;font-size:12.8px"><span style="color:#6a9955">      //  className=" bg-violet-700 sm:bg-red-500 md:bg-yellow-500 lg:bg-green-700 xl:bg-black 2xl:bg-pink-500  text-white p-m-20 "</span></div>
<div class="m" style="left:318.0px;top:228px;height:19px;line-height:19px;font-size:12.8px"><span style="color:#d4d4d4">      </span><span style="color:#808080">&gt;</span></div>
<div class="m" style="left:318.0px;top:247px;height:19px;line-height:19px;font-size:12.8px"><span style="color:#d4d4d4">         </span><span style="color:#808080">&lt;</span><span style="color:#569cd6">div</span><span style="color:#808080">&gt;</span><span style="color:#d4d4d4">helow world</span><span style="color:#808080">&lt;/</span><span style="color:#569cd6">div</span><span style="color:#808080">&gt;</span></div>
<div class="m" style="left:318.0px;top:285px;height:19px;line-height:19px;font-size:12.8px"><span style="color:#d4d4d4">         </span><span style="color:#179fff">{</span><span style="color:#6a9955">/* &lt;div className="  flex  justify-center items-end flex-wrap gap-8"&gt;</span></div>
<svg style="left:928.5px;top:284px" width="14" height="19" viewBox="0 0 14 19"><circle cx="2" cy="10" r="0.95" fill="#8c8c8c"/><circle cx="6" cy="10" r="0.95" fill="#8c8c8c"/><circle cx="10" cy="10" r="0.95" fill="#8c8c8c"/></svg>
<svg style="left:1014.5px;top:322px" width="14" height="19" viewBox="0 0 14 19"><circle cx="2" cy="10" r="0.95" fill="#8c8c8c"/><circle cx="6" cy="10" r="0.95" fill="#8c8c8c"/><circle cx="10" cy="10" r="0.95" fill="#8c8c8c"/></svg>
<div class="m" style="left:318.0px;top:304px;height:19px;line-height:19px;font-size:12.8px"><span style="color:#d4d4d4">         </span><span style="color:#6a9955">&lt;/div&gt; */</span><span style="color:#179fff">}</span></div>
<div class="m" style="left:318.0px;top:323px;height:19px;line-height:19px;font-size:12.8px"><span style="color:#d4d4d4">         </span><span style="color:#179fff">{</span><span style="color:#6a9955">/* &lt;div className=" py-4 px-6 bg-[</span></div>
<div style="left:660px;top:325.5px;width:11px;height:11px;background:#1b1d20;border:1.3px solid #f0f0f0"></div>
<div class="m" style="left:674px;top:323px;height:19px;line-height:19px;font-size:12.8px;color:#6a9955">#1B1D20] flex items-center justify-between"&gt;</div>
<div class="m" style="left:318.0px;top:342px;height:19px;line-height:19px;font-size:12.8px"><span style="color:#d4d4d4">         </span><span style="color:#6a9955">&lt;/div&gt; */</span><span style="color:#179fff">}</span></div>
<div class="m" style="left:318.0px;top:399px;height:19px;line-height:19px;font-size:12.8px"><span style="color:#d4d4d4">         </span><span style="color:#f44747">&lt;</span><span style="color:#4ec9b0">Image</span></div>
<div style="left:432.5px;top:399px;width:2px;height:17px;background:#d0d0d0;"></div>
<div class="m" style="left:318.0px;top:418px;height:19px;line-height:19px;font-size:12.8px"><span style="color:#d4d4d4">      </span><span style="color:#f44747">&lt;/div&gt;</span></div>
<svg style="left:350px;top:430px" width="36" height="8" viewBox="0 0 36 8"><path d="M1 5q2.5-3 5 0t5 0M12 5q2.5-3 5 0t5 0t5 0t5 0" stroke="#f14c4c" stroke-width="1.2" fill="none"/></svg>
<div class="m" style="left:318.0px;top:437px;height:19px;line-height:19px;font-size:12.8px"><span style="color:#d4d4d4">   </span><span style="color:#da70d6">)</span><span style="color:#f44747">;</span></div>
<div style="left:341px;top:436px;width:9px;height:19px;background:transparent;border:1px solid #8a8a8a"></div>
<div class="m" style="left:318.0px;top:456px;height:19px;line-height:19px;font-size:12.8px"><span style="color:#ffd700">}</span></div>
<div class="m" style="left:318.0px;top:494px;height:19px;line-height:19px;font-size:12.8px"><span style="color:#9cdcfe">export default</span></div>
<div style="left:1351px;top:94px;width:1px;height:606px;background:#191919;"></div>
<div style="left:1352px;top:94px;width:8px;height:352px;background:#3a3a3a;"></div>
<div style="left:1352px;top:269px;width:8px;height:2px;background:#a0a0a0;"></div>
<div style="left:433px;top:417px;width:432px;height:270px;background:#202020;border:1px solid #454545"></div>
<div style="left:434px;top:437px;width:430px;height:19px;background:#04395e;"></div>
<svg style="left:436px;top:420px" width="16" height="16" viewBox="0 0 16 16"><path d="M3.5 3.5H1.8v9h1.7M12.5 3.5h1.7v9h-1.7" stroke="#75beff" stroke-width="1.1" fill="none"/><ellipse cx="8" cy="8.2" rx="4.1" ry="3.1" transform="rotate(-28 8 8.2)" fill="#75beff" fill-opacity="0.85"/><path d="M5.6 9.8 9.6 6.4M5 7.6l2.2-1.8" stroke="#1f1f1f" stroke-width="0.8" opacity="0.75"/></svg>
<div class="m" style="left:456px;top:419px;height:19px;line-height:19px;font-size:12.8px;"><span style="color:#38a3ee">Image</span></div>
<svg style="left:436px;top:439px" width="16" height="16" viewBox="0 0 16 16"><path d="M3.5 3.5H1.8v9h1.7M12.5 3.5h1.7v9h-1.7" stroke="#e6e6e6" stroke-width="1.1" fill="none"/><ellipse cx="8" cy="8.2" rx="4.1" ry="3.1" transform="rotate(-28 8 8.2)" fill="#e6e6e6" fill-opacity="0.85"/><path d="M5.6 9.8 9.6 6.4M5 7.6l2.2-1.8" stroke="#1f1f1f" stroke-width="0.8" opacity="0.75"/></svg>
<div class="m" style="left:456px;top:438px;height:19px;line-height:19px;font-size:12.8px;"><span style="color:#38a3ee">Image</span></div>
<svg style="left:436px;top:458px" width="16" height="16" viewBox="0 0 16 16"><path d="M3.5 3.5H1.8v9h1.7M12.5 3.5h1.7v9h-1.7" stroke="#75beff" stroke-width="1.1" fill="none"/><ellipse cx="8" cy="8.2" rx="4.1" ry="3.1" transform="rotate(-28 8 8.2)" fill="#75beff" fill-opacity="0.85"/><path d="M5.6 9.8 9.6 6.4M5 7.6l2.2-1.8" stroke="#1f1f1f" stroke-width="0.8" opacity="0.75"/></svg>
<div class="m" style="left:456px;top:457px;height:19px;line-height:19px;font-size:12.8px;"><span style="color:#38a3ee">Image</span><span style="color:#cccccc">Bitmap</span></div>
<svg style="left:436px;top:477px" width="16" height="16" viewBox="0 0 16 16"><path d="M3.5 3.5H1.8v9h1.7M12.5 3.5h1.7v9h-1.7" stroke="#75beff" stroke-width="1.1" fill="none"/><ellipse cx="8" cy="8.2" rx="4.1" ry="3.1" transform="rotate(-28 8 8.2)" fill="#75beff" fill-opacity="0.85"/><path d="M5.6 9.8 9.6 6.4M5 7.6l2.2-1.8" stroke="#1f1f1f" stroke-width="0.8" opacity="0.75"/></svg>
<div class="m" style="left:456px;top:476px;height:19px;line-height:19px;font-size:12.8px;"><span style="color:#38a3ee">Image</span><span style="color:#cccccc">BitmapRenderingContext</span></div>
<svg style="left:436px;top:496px" width="16" height="16" viewBox="0 0 16 16"><path d="M3.5 3.5H1.8v9h1.7M12.5 3.5h1.7v9h-1.7" stroke="#75beff" stroke-width="1.1" fill="none"/><ellipse cx="8" cy="8.2" rx="4.1" ry="3.1" transform="rotate(-28 8 8.2)" fill="#75beff" fill-opacity="0.85"/><path d="M5.6 9.8 9.6 6.4M5 7.6l2.2-1.8" stroke="#1f1f1f" stroke-width="0.8" opacity="0.75"/></svg>
<div class="m" style="left:456px;top:495px;height:19px;line-height:19px;font-size:12.8px;"><span style="color:#38a3ee">Image</span><span style="color:#cccccc">Data</span></div>
<svg style="left:436px;top:515px" width="16" height="16" viewBox="0 0 16 16"><path d="M3.5 3.5H1.8v9h1.7M12.5 3.5h1.7v9h-1.7" stroke="#75beff" stroke-width="1.1" fill="none"/><ellipse cx="8" cy="8.2" rx="4.1" ry="3.1" transform="rotate(-28 8 8.2)" fill="#75beff" fill-opacity="0.85"/><path d="M5.6 9.8 9.6 6.4M5 7.6l2.2-1.8" stroke="#1f1f1f" stroke-width="0.8" opacity="0.75"/></svg>
<div class="m" style="left:456px;top:514px;height:19px;line-height:19px;font-size:12.8px;"><span style="color:#38a3ee">Image</span><span style="color:#cccccc">ConfigContext</span></div>
<div class="m" style="right:507px;top:514px;height:19px;line-height:19px;font-size:10.85px;color:#9d9d9d">next/dist/shared/lib/image-config-co…</div>
<svg style="left:436px;top:534px" width="16" height="16" viewBox="0 0 16 16"><path d="M3.5 3.5H1.8v9h1.7M12.5 3.5h1.7v9h-1.7" stroke="#75beff" stroke-width="1.1" fill="none"/><ellipse cx="8" cy="8.2" rx="4.1" ry="3.1" transform="rotate(-28 8 8.2)" fill="#75beff" fill-opacity="0.85"/><path d="M5.6 9.8 9.6 6.4M5 7.6l2.2-1.8" stroke="#1f1f1f" stroke-width="0.8" opacity="0.75"/></svg>
<div class="m" style="left:456px;top:533px;height:19px;line-height:19px;font-size:12.8px;"><span style="color:#38a3ee">Image</span><span style="color:#cccccc">ConfigConte…</span></div>
<div class="m" style="right:507px;top:533px;height:19px;line-height:19px;font-size:10.85px;color:#9d9d9d">next/dist/server/route-modules/pages/…</div>
<svg style="left:436px;top:553px" width="16" height="16" viewBox="0 0 16 16"><g stroke="#ee9d28" stroke-width="1.2" fill="none"><path d="M2 4.5 4.5 2 7 4.5 4.5 7z"/><path d="M9.5 11.5 11.5 9.5 13.5 11.5 11.5 13.5z"/><path d="M9.5 4.5 11.5 2.5 13.5 4.5 11.5 6.5z"/><path d="M6.2 5.8 9.8 4.5M5 6.5v3.5h4.5"/></g></svg>
<div class="m" style="left:456px;top:552px;height:19px;line-height:19px;font-size:12.8px;"><span style="color:#38a3ee">Image</span><span style="color:#cccccc">Error</span></div>
<div class="m" style="right:507px;top:552px;height:19px;line-height:19px;font-size:10.85px;color:#9d9d9d">next/dist/server/image-optimizer</div>
<svg style="left:436px;top:572px" width="16" height="16" viewBox="0 0 16 16"><g stroke="#ee9d28" stroke-width="1.2" fill="none"><path d="M2 4.5 4.5 2 7 4.5 4.5 7z"/><path d="M9.5 11.5 11.5 9.5 13.5 11.5 11.5 13.5z"/><path d="M9.5 4.5 11.5 2.5 13.5 4.5 11.5 6.5z"/><path d="M6.2 5.8 9.8 4.5M5 6.5v3.5h4.5"/></g></svg>
<div class="m" style="left:456px;top:571px;height:19px;line-height:19px;font-size:12.8px;"><span style="color:#38a3ee">Image</span><span style="color:#cccccc">OptimizerCache</span></div>
<div class="m" style="right:507px;top:571px;height:19px;line-height:19px;font-size:10.85px;color:#9d9d9d">next/dist/server/image-optimizer</div>
<svg style="left:436px;top:591px" width="16" height="16" viewBox="0 0 16 16"><path d="M3.5 3.5H1.8v9h1.7M12.5 3.5h1.7v9h-1.7" stroke="#75beff" stroke-width="1.1" fill="none"/><ellipse cx="8" cy="8.2" rx="4.1" ry="3.1" transform="rotate(-28 8 8.2)" fill="#75beff" fill-opacity="0.85"/><path d="M5.6 9.8 9.6 6.4M5 7.6l2.2-1.8" stroke="#1f1f1f" stroke-width="0.8" opacity="0.75"/></svg>
<div class="m" style="left:456px;top:590px;height:19px;line-height:19px;font-size:12.8px;text-decoration:line-through;"><span style="color:#8f8f8f">ImageResponse</span></div>
<div class="m" style="right:507px;top:590px;height:19px;line-height:19px;font-size:10.85px;color:#9d9d9d">next/server</div>
<svg style="left:436px;top:610px" width="16" height="16" viewBox="0 0 16 16"><g stroke="#75beff" stroke-width="1.2" fill="none" stroke-linejoin="round"><path d="M8 1.8 14 4.8v6.4L8 14.2 2 11.2V4.8z"/><path d="M2 4.8 8 7.8l6-3M8 7.8v6.4"/></g></svg>
<div class="m" style="left:456px;top:609px;height:19px;line-height:19px;font-size:12.8px;"><span style="color:#38a3ee">image</span></div>
<svg style="left:436px;top:629px" width="16" height="16" viewBox="0 0 16 16"><path d="M3.5 3.5H1.8v9h1.7M12.5 3.5h1.7v9h-1.7" stroke="#75beff" stroke-width="1.1" fill="none"/><ellipse cx="8" cy="8.2" rx="4.1" ry="3.1" transform="rotate(-28 8 8.2)" fill="#75beff" fill-opacity="0.85"/><path d="M5.6 9.8 9.6 6.4M5 7.6l2.2-1.8" stroke="#1f1f1f" stroke-width="0.8" opacity="0.75"/></svg>
<div class="m" style="left:456px;top:628px;height:19px;line-height:19px;font-size:12.8px;"><span style="color:#38a3ee">IMAGE</span><span style="color:#cccccc">S_MANIFEST</span></div>
<div class="m" style="right:507px;top:628px;height:19px;line-height:19px;font-size:10.85px;color:#9d9d9d">next/dist/shared/lib/constants</div>
<svg style="left:436px;top:648px" width="16" height="16" viewBox="0 0 16 16"><g stroke="#75beff" stroke-width="1.2" fill="none" stroke-linejoin="round"><path d="M8 1.8 14 4.8v6.4L8 14.2 2 11.2V4.8z"/><path d="M2 4.8 8 7.8l6-3M8 7.8v6.4"/></g></svg>
<div class="m" style="left:456px;top:647px;height:19px;line-height:19px;font-size:12.8px;"><span style="color:#cccccc">fe</span><span style="color:#38a3ee">Image</span></div>
<svg style="left:436px;top:667px" width="16" height="16" viewBox="0 0 16 16"><g stroke="#b180d7" stroke-width="1.2" fill="none" stroke-linejoin="round"><path d="M8 1.8 14 4.8v6.4L8 14.2 2 11.2V4.8z"/><path d="M2 4.8 8 7.8l6-3M8 7.8v6.4"/></g></svg>
<div class="m" style="left:456px;top:666px;height:19px;line-height:19px;font-size:12.8px;"><span style="color:#cccccc">create</span><span style="color:#38a3ee">Image</span><span style="color:#cccccc">Bitmap</span></div>
<div class="m" style="left:788px;top:438px;height:19px;line-height:19px;font-size:10.85px;color:#c8c8c8">next/im…</div>
<svg style="left:836px;top:439px" width="16" height="16" viewBox="0 0 16 16"><path d="M6 4 10 8l-4 4" stroke="#d0d0d0" stroke-width="1.3" fill="none"/></svg>
<div style="left:744.5px;top:412px;width:59px;height:59px;background:rgba(180,172,0,0.68);border-radius:50%"></div>
<svg style="left:766px;top:440px" width="20" height="26" viewBox="0 0 20 26"><path d="M5.5 2.8a1.6 1.6 0 0 1 3.2 0V10a1.45 1.45 0 0 1 2.9 0v1a1.45 1.45 0 0 1 2.9 0v1a1.45 1.45 0 0 1 2.9 0v6c0 3.2-2.2 5.8-5.2 5.8H10c-2 0-3.3-1-4.3-2.6L1.8 15.5c-.7-1.1.6-2.4 1.7-1.6L5.5 15.6z" fill="#ffffff" stroke="#111" stroke-width="1.3" stroke-linejoin="round"/></svg>
<div style="left:865px;top:417px;width:331px;height:196px;background:#202020;border:1px solid #454545"></div>
<div class="m" style="left:870px;top:420.5px;height:19px;line-height:19px;font-size:12.8px;color:#c4c4c4">Add import from "next/image"</div>
<svg style="left:1176px;top:423px" width="14" height="14" viewBox="0 0 14 14"><path d="M3 3l8 8M11 3l-8 8" stroke="#d0d0d0" stroke-width="1.3"/></svg>
<div class="m" style="left:870px;top:458.5px;height:19px;line-height:19px;font-size:12.8px;color:#c4c4c4">const Image: ForwardRefExoticComponent…</div>
<div class="m" style="left:870px;top:477.5px;height:19px;line-height:19px;font-size:12.8px;color:#c4c4c4">    ...;</div>
<div class="m" style="left:870px;top:496.5px;height:19px;line-height:19px;font-size:12.8px;color:#c4c4c4">} &amp; RefAttributes&lt;...&gt;&gt;</div>
<div class="s" style="left:870.5px;top:535px;height:18px;line-height:18px;color:#cccccc;font-size:13px;">The</div>
<div style="left:896px;top:536px;width:50px;height:16px;background:#282828;border-radius:3px"></div>
<div class="m" style="left:902.5px;top:535.5px;height:19px;line-height:19px;font-size:12.6px;color:#cccccc">Image</div>
<div class="s" style="left:950px;top:535px;height:18px;line-height:18px;color:#cccccc;font-size:13px;letter-spacing:0.52px">component is used to optimize</div>
<div class="s" style="left:870.5px;top:556px;height:18px;line-height:18px;color:#cccccc;font-size:13px;">images.</div>
<div class="s" style="left:870.5px;top:589px;height:18px;line-height:18px;color:#cccccc;font-size:13px;">Read more:</div>
<div class="s" style="left:944.5px;top:589px;height:18px;line-height:18px;color:#4daafc;font-size:13px;letter-spacing:0.15px">Next.js docs:</div>
<div style="left:1025px;top:590px;width:50px;height:16px;background:#282828;border-radius:3px"></div>
<div class="m" style="left:1031px;top:589.5px;height:19px;line-height:19px;font-size:12.6px;color:#4daafc">Image</div>
<svg style="left:9px;top:703px" width="16" height="16" viewBox="0 0 16 16"><path d="M3.5 7.5 7 10.5 3.5 13.5M12.5 2.5 9 5.5 12.5 8.5" stroke="#ffffff" stroke-width="1.4" fill="none"/></svg>
<svg style="left:40px;top:703px" width="16" height="16" viewBox="0 0 16 16"><circle cx="4.5" cy="3.5" r="1.8" stroke="#cccccc" stroke-width="1.1" fill="none"/><circle cx="4.5" cy="12.8" r="1.8" stroke="#cccccc" stroke-width="1.1" fill="none"/><circle cx="11.5" cy="5" r="1.8" stroke="#cccccc" stroke-width="1.1" fill="none"/><path d="M4.5 5.3v5.7M11.5 6.8c0 2.5-3 3-7 4.2" stroke="#cccccc" stroke-width="1.1" fill="none"/></svg>
<div class="s" style="left:57.3px;top:702px;height:20px;line-height:20px;color:#cccccc;font-size:12px;">master*</div>
<svg style="left:104px;top:703px" width="16" height="16" viewBox="0 0 16 16"><path d="M4 12.5H3.5a3 3 0 0 1-.3-6 4.5 4.5 0 0 1 8.8-.8 3.2 3.2 0 0 1 .5 6.8H12" stroke="#cccccc" stroke-width="1.1" fill="none"/><path d="M8 14V8M5.8 10 8 7.8 10.2 10" stroke="#cccccc" stroke-width="1.1" fill="none"/></svg>
<svg style="left:133px;top:703px" width="16" height="16" viewBox="0 0 16 16"><path d="M4.5 2v12M11 2v12" stroke="#cccccc" stroke-width="1.1"/><circle cx="4.5" cy="5" r="1.8" fill="#181818" stroke="#cccccc" stroke-width="1.1"/><circle cx="11" cy="11" r="1.8" fill="#181818" stroke="#cccccc" stroke-width="1.1"/><path d="M4.5 9c3 0 6.5 0 6.5-4" stroke="#cccccc" stroke-width="1.1" fill="none"/></svg>
<svg style="left:162px;top:703px" width="16" height="16" viewBox="0 0 16 16"><path d="M3 13c0-3 1-6 5-9.5 2-1.5 4-2 5.5-2-.2 1.5-.5 3.5-2 5.5-3.5 4-6.5 5-8.5 6z" stroke="#cccccc" stroke-width="1.1" fill="none"/><path d="M2 10.5 3.5 9M5.5 14l1.5-1.5M1.5 14.5 4 12" stroke="#cccccc" stroke-width="1.1"/></svg>
<svg style="left:178px;top:703px" width="16" height="16" viewBox="0 0 16 16"><path d="M3 13.5 12.5 4" stroke="#cccccc" stroke-width="1.1"/><circle cx="4" cy="12" r="2.2" stroke="#cccccc" stroke-width="1.1" fill="none"/><circle cx="11.5" cy="4.5" r="2.2" stroke="#cccccc" stroke-width="1.1" fill="none"/></svg>
<div class="s" style="left:194px;top:702px;height:20px;line-height:20px;color:#cccccc;font-size:11.7px;">Launchpad</div>
<svg style="left:267px;top:703px" width="16" height="16" viewBox="0 0 16 16"><circle cx="8" cy="8" r="6.2" stroke="#cccccc" stroke-width="1.1" fill="none"/><path d="M5.5 5.5l5 5M10.5 5.5l-5 5" stroke="#cccccc" stroke-width="1.1"/></svg>
<div class="s" style="left:284px;top:702px;height:20px;line-height:20px;color:#cccccc;font-size:12px;">2</div>
<svg style="left:294px;top:703px" width="16" height="16" viewBox="0 0 16 16"><path d="M8 2 14.5 14h-13z" stroke="#cccccc" stroke-width="1.1" fill="none" stroke-linejoin="round"/><path d="M8 6v4.5M8 12v1" stroke="#cccccc" stroke-width="1.1"/></svg>
<div class="s" style="left:311px;top:702px;height:20px;line-height:20px;color:#cccccc;font-size:12px;">0</div>
<svg style="left:334px;top:703px" width="16" height="16" viewBox="0 0 16 16"><path d="M8 8 5 14.5M8 8l3 6.5M6 12h4" stroke="#cccccc" stroke-width="1.1" fill="none"/><circle cx="8" cy="6.5" r="1.3" fill="#cccccc"/><path d="M5 4a4 4 0 0 0 0 5M11 4a4 4 0 0 1 0 5M3 2.5a6.5 6.5 0 0 0 0 8M13 2.5a6.5 6.5 0 0 1 0 8" stroke="#cccccc" stroke-width="1" fill="none"/></svg>
<div class="s" style="left:350.5px;top:702px;height:20px;line-height:20px;color:#cccccc;font-size:12px;">0</div>
<div class="s" style="left:374px;top:702px;height:20px;line-height:20px;color:#cccccc;font-size:11.2px;">{..} : Scanning..</div>
<svg style="left:468px;top:703px" width="16" height="16" viewBox="0 0 16 16"><path d="M9.5 2 5.5 8.5h5L6.5 15" stroke="#cccccc" stroke-width="1.2" fill="none"/><path d="M6.5 2.8a6 6 0 0 0-1 2" stroke="#cccccc" stroke-width="1"/></svg>
<div class="s" style="left:848px;top:702px;height:20px;line-height:20px;color:#cccccc;font-size:11.7px;">Ln 39, Col 16</div>
<div class="s" style="left:932.5px;top:702px;height:20px;line-height:20px;color:#cccccc;font-size:11.2px;">Spaces: 3</div>
<div class="s" style="left:997px;top:702px;height:20px;line-height:20px;color:#cccccc;font-size:11.7px;">UTF-8</div>
<div class="s" style="left:1044.5px;top:702px;height:20px;line-height:20px;color:#cccccc;font-size:11.7px;letter-spacing:-0.6px">CRLF</div>
<div class="s" style="left:1087px;top:702px;height:20px;line-height:20px;color:#cccccc;font-size:11.5px;">{ }</div>
<div class="s" style="left:1105px;top:702px;height:20px;line-height:20px;color:#cccccc;font-size:11.7px;letter-spacing:-0.35px">JavaScript JSX</div>
<svg style="left:1192px;top:703px" width="16" height="16" viewBox="0 0 16 16"><circle cx="8" cy="6" r="1.6" fill="#cccccc"/><path d="M8 8v6.5" stroke="#cccccc" stroke-width="1.8"/><path d="M5.2 9a4 4 0 1 1 5.6 0M3.2 11a6.7 6.7 0 1 1 9.6 0" stroke="#cccccc" stroke-width="1.1" fill="none"/></svg>
<div class="s" style="left:1209.5px;top:702px;height:20px;line-height:20px;color:#cccccc;font-size:11.7px;">Go Live</div>
<svg style="left:1263px;top:703px" width="16" height="16" viewBox="0 0 16 16"><path d="M1.5 9 4 11.5 10 3.5M6.5 11.5 13.5 3" stroke="#cccccc" stroke-width="1.1" fill="none"/></svg>
<div class="s" style="left:1282.5px;top:702px;height:20px;line-height:20px;color:#cccccc;font-size:11.9px;">Prettier</div>
<svg style="left:1336px;top:703px" width="16" height="16" viewBox="0 0 16 16"><path d="M4 11.5V7a4 4 0 0 1 8 0v4.5l1.5 1.5h-11z" stroke="#cccccc" stroke-width="1.2" fill="none" stroke-linejoin="round"/><path d="M6.5 14.5h3" stroke="#cccccc" stroke-width="1.2"/></svg>
<div style="left:1180px;top:0px;width:164px;height:53.5px;background:#ffffff;"></div>
<svg style="left:1198px;top:8px" width="42" height="40" viewBox="0 0 42 40"><g stroke="#2a9ee0" stroke-width="2.4" fill="none"><path d="M3 38V3.2h31.5a3 3 0 0 1 3 3V34.5a3 3 0 0 1-3 3H19.6V3.2M3 19.6h34.5"/></g></svg>
<div class="s" style="left:1252px;top:14px;height:24px;line-height:24px;color:#222;font-size:18.2px;letter-spacing:0.55px;-webkit-text-stroke:0.35px currentColor"><span style="color:#4da1d9;-webkit-text-stroke:0.35px #4da1d9">mern</span><span style="color:#f0c46a;-webkit-text-stroke:0.35px #f0c46a">fa</span><span style="color:#222;-webkit-text-stroke:0.35px #222">.ir</span></div></body></html>
